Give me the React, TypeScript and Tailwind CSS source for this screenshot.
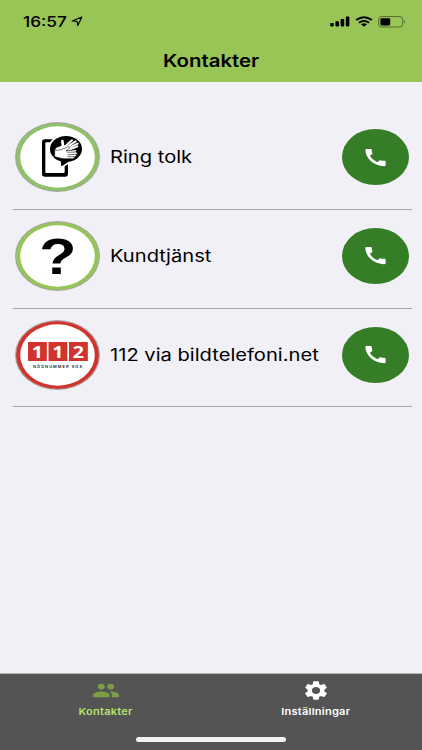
import React from "react";
import { MdCall, MdPeople, MdSettings } from "react-icons/md";

interface Contact {
  name: string;
  icon: React.ReactNode;
}

const InterpreterIcon = () => (
  <svg viewBox="0 0 255 210" className="h-[70px] w-[85px]">
    <ellipse cx="127.5" cy="105" rx="127.5" ry="105" fill="#a0aa98" />
    <ellipse cx="127.5" cy="105" rx="124" ry="101.5" fill="#8fc268" />
    <ellipse cx="127.5" cy="105" rx="112" ry="92" fill="#fff" />
    <path
      fillRule="evenodd"
      d="M90 52h60q9 0 9 8v96q0 8-9 8H90q-9 0-9-8V60q0-8 9-8zm4 9q-3 0-3 3v85q0 4 4 4h50q4 0 4-4V61z"
      fill="#000"
    />
    <ellipse cx="152" cy="81" rx="53" ry="44" fill="#fff" />
    <path d="M134 112L137 137L168 118Z" fill="#000" stroke="#fff" strokeWidth="5" />
    <ellipse cx="153" cy="81" rx="48" ry="39" fill="#000" />
    <path d="M137 112L142 131L164 115Z" fill="#000" />
    <g stroke="#fff" strokeLinecap="round" fill="#fff">
      <path d="M124 78L144 70L160 73L152 90L132 98L119 86Z" />
      <path d="M144 74L142 57" strokeWidth="8" />
      <path d="M148 75L171 55" strokeWidth="6" />
      <path d="M153 77L182 58" strokeWidth="6" />
      <path d="M157 80L188 65" strokeWidth="6" />
      <path d="M160 84L187 73" strokeWidth="6" />
    </g>
    <g stroke="#000" strokeWidth="1.6" fill="#fff">
      <path d="M119 86L139 83L160 74Q165 76 163 79L153 87L181 83Q187 86 182 90L184 90Q190 94 184 97Q186 103 180 104Q180 110 172 110L144 110L119 104Z" />
      <path d="M157 91L182 90M158 98L184 97M157 104L180 104" fill="none" />
    </g>
  </svg>
);

const QuestionIcon = () => (
  <svg viewBox="0 0 255 210" className="h-[70px] w-[85px]">
    <ellipse cx="127.5" cy="105" rx="127.5" ry="105" fill="#a0aa98" />
    <ellipse cx="127.5" cy="105" rx="124" ry="101.5" fill="#97c557" />
    <ellipse cx="127.5" cy="105" rx="112" ry="92" fill="#fff" />
    <text
      transform="translate(128.5 158) scale(1.2 1)"
      textAnchor="middle"
      className="font-['Liberation_Sans',sans-serif] text-[152px] font-bold"
    >
      ?
    </text>
  </svg>
);

const EmergencyIcon = () => (
  <svg viewBox="0 0 255 210" className="h-[70px] w-[85px]">
    <ellipse cx="127.5" cy="105" rx="127.5" ry="105" fill="#b09d9d" />
    <ellipse cx="127.5" cy="105" rx="124" ry="101.5" fill="#d0342c" />
    <ellipse cx="127.5" cy="105" rx="112" ry="92" fill="#fff" />
    {["1", "1", "2"].map((digit, i) => (
      <g key={i} transform={`translate(${39 + i * 61.5} 66)`}>
        <rect width="56.5" height="57" fill="#d0342c" />
        <text
          transform="translate(28 47) scale(1.18 1)"
          textAnchor="middle"
          fill="#fff"
          className="font-['Open_Sans',sans-serif] text-[50px] font-bold"
        >
          {digit}
        </text>
      </g>
    ))}
    <text
      x="54"
      y="143"
      textLength="147"
      lengthAdjust="spacing"
      fill="#222"
      className="font-['Inter',sans-serif] text-[12px] font-semibold"
    >
      NÖDNUMMER SOS
    </text>
  </svg>
);

const contacts: Contact[] = [
  { name: "Ring tolk", icon: <InterpreterIcon /> },
  { name: "Kundtjänst", icon: <QuestionIcon /> },
  { name: "112 via bildtelefoni.net", icon: <EmergencyIcon /> },
];

const StatusBar = () => (
  <div className="flex h-[43px] items-center justify-between pr-4 pl-[23px]">
    <div className="flex items-center">
      <span className="w-[48px] origin-left scale-x-[1.19] text-[14.5px] font-medium">
        16:57
      </span>
      <svg viewBox="0 0 12 11" className="h-[11px] w-3">
        <path
          d="M1.2 5L10.8 1L6.8 9.6L6.1 5.3Z"
          fill="none"
          stroke="#000"
          strokeWidth="1.2"
          strokeLinejoin="round"
        />
      </svg>
    </div>
    <div className="flex items-center">
      <svg viewBox="0 0 20 11" className="mr-[5px] h-[11px] w-5">
        <rect x="0.2" y="7" width="3.6" height="3.4" rx="0.8" />
        <rect x="5.4" y="5.2" width="3.6" height="5.2" rx="0.8" />
        <rect x="10.6" y="3" width="3.6" height="7.4" rx="0.8" />
        <rect x="15.8" y="0.6" width="3.6" height="9.8" rx="0.8" />
      </svg>
      <svg viewBox="0 0 18 11" className="mr-[5px] h-[11px] w-[18px]">
        <g fill="none" stroke="#000" strokeWidth="1.9">
          <path d="M1.1 4.1Q9 -1.7 16.9 4.1" />
          <path d="M4 6.7Q9 3 14 6.7" />
        </g>
        <path d="M6 8.3Q9 6.1 12 8.3L9 10.7Z" />
      </svg>
      <svg viewBox="0 0 28 12" className="h-3 w-7">
        <rect
          x="0.6"
          y="0.6"
          width="24"
          height="10.4"
          rx="2.8"
          fill="none"
          stroke="#000"
          strokeOpacity="0.45"
        />
        <rect x="2.4" y="2.2" width="9.8" height="7.2" rx="1.4" />
        <path d="M26 4Q28.2 5.8 26 7.6Z" fillOpacity="0.5" />
      </svg>
    </div>
  </div>
);

const ContactRow: React.FC<{ contact: Contact }> = ({ contact }) => (
  <li className="flex h-[98.7px] items-center border-b border-[#a5a4aa] pt-[3px] pr-[3px] pb-[9px] pl-[2px]">
    {contact.icon}
    <span className="ml-[9.5px] origin-left scale-x-[1.185] pt-[1.5px] text-[17px] whitespace-nowrap">
      {contact.name}
    </span>
    <button
      aria-label={`Ring ${contact.name}`}
      className="ml-auto flex h-[56px] w-[67.5px] shrink-0 items-center justify-center rounded-[50%] bg-[#367d28] text-white"
    >
      <MdCall preserveAspectRatio="none" className="h-[23px] w-[27px]" />
    </button>
  </li>
);

export default function App() {
  return (
    <div className="flex h-[750px] w-[422px] flex-col overflow-hidden bg-[#f1f0f6] font-['Inter',sans-serif] text-black">
      <header className="h-[82px] shrink-0 bg-[#99c556]">
        <StatusBar />
        <h1 className="mt-[6px] flex justify-center text-[17px] leading-6 font-semibold">
          <span className="scale-x-[1.2]">Kontakter</span>
        </h1>
      </header>

      <ul className="flex-1 pt-[29.3px] pr-[10px] pl-[13px]">
        {contacts.map((contact) => (
          <ContactRow key={contact.name} contact={contact} />
        ))}
      </ul>

      <footer className="flex h-[77px] shrink-0 flex-col items-center border-t border-[#b5b5b8] bg-[#545454]">
        <nav className="grid w-full grid-cols-2 text-[9.2px] leading-3 font-semibold tracking-[0.2px]">
          <button className="flex flex-col items-center pt-[5px] text-[#b5e36c]">
            <MdPeople
              preserveAspectRatio="none"
              className="h-[23px] w-[28px] text-[#7ba043]"
            />
            <span className="mt-1 scale-x-[1.2]">Kontakter</span>
          </button>
          <button className="flex flex-col items-center pt-[5px] pr-px text-white">
            <MdSettings preserveAspectRatio="none" className="h-[23px] w-[28px]" />
            <span className="mt-1 scale-x-[1.2]">Inställningar</span>
          </button>
        </nav>
        <div className="mt-auto mb-[8px] h-[5px] w-[150px] rounded-full bg-[#f2f2f2]" />
      </footer>
    </div>
  );
}
